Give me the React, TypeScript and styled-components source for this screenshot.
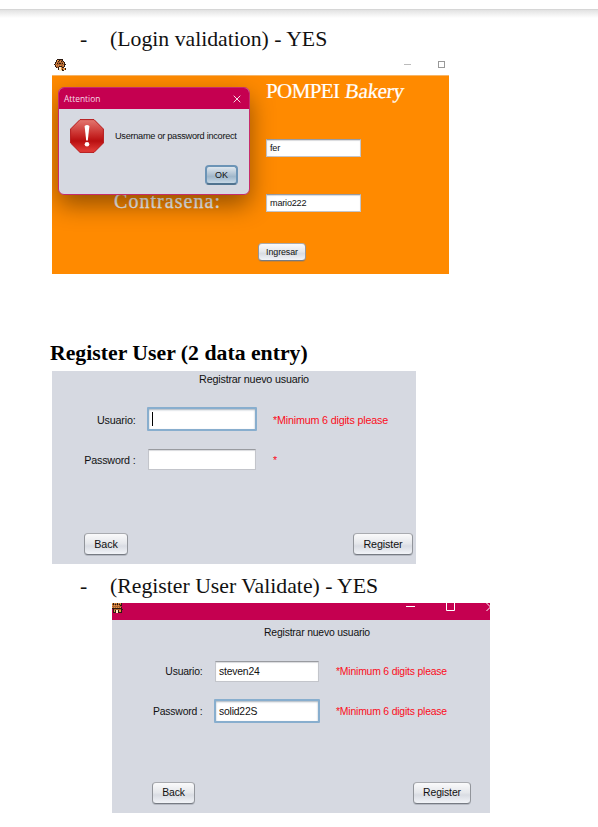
import React from "react";
import styled, { createGlobalStyle, css } from "styled-components";

const GlobalStyle = createGlobalStyle`
  * { box-sizing: border-box; }
  html, body { margin: 0; padding: 0; background: #fff; }
  body { width: 598px; height: 827px; overflow: hidden; }
`;

const sans = `"Liberation Sans", Arial, sans-serif`;
const serif = `"Liberation Serif", "Times New Roman", serif`;

const Page = styled.main`
  display: flex;
  flex-direction: column;
  align-items: flex-start;
  width: 598px;
  height: 827px;
  background: #fff;
`;

const PageEdge = styled.div`
  width: 100%;
  height: 9px;
  margin-top: 9px;
  border-top: 1px solid #d6d6d6;
  background: linear-gradient(#e2e2e2, #fff);
`;

const BulletLine = styled.h2<{ $top: number }>`
  display: flex;
  margin: ${(p) => p.$top}px 0 0 80px;
  font: 400 21.75px/24px ${serif};
  color: #111;
  white-space: nowrap;
`;

const Dash = styled.span`
  width: 30px;
`;

const SectionTitle = styled.h1`
  margin: 67px 0 6px 50px;
  font: 700 21.75px/24px ${serif};
  color: #000;
  white-space: nowrap;
`;

/* Login window */
const LoginWindow = styled.section`
  position: relative;
  width: 397px;
  height: 219px;
  margin: 4px 0 0 52px;
  overflow: hidden;
`;

const LoginTitleBar = styled.header`
  display: flex;
  align-items: flex-start;
  justify-content: space-between;
  height: 20px;
  padding: 4px 4px 0 2px;
  background: #fff;
`;

const LightControls = styled.div`
  display: flex;
  gap: 27px;
  padding-top: 2px;
`;

const LoginBody = styled.div`
  display: grid;
  grid-template-columns: 214px 1fr;
  grid-template-rows: 63px 55px 49px 31px;
  height: 199px;
  background: #ff8a00;
  border-top: 1px solid #f7b566;
`;

const Brand = styled.div`
  grid-column: 2;
  display: flex;
  gap: 4px;
  padding-top: 2px;
  font: 400 21px/26px Gabriola, ${serif};
  color: #fff;
  white-space: nowrap;
`;

const BrandName = styled.span`
  letter-spacing: -0.6px;
  -webkit-text-stroke: 0.2px #fff;
`;

const BrandKind = styled.span`
  transform: skewX(-7deg);
  font-size: 21px;
  letter-spacing: -0.35px;
  -webkit-text-stroke: 0.2px #fff;
`;

const Caption = styled.div`
  margin-top: -5px;
  padding: 0 0 0 62px;
  font: 400 20px/24px Gabriola, ${serif};
  letter-spacing: 1.05px;
  -webkit-text-stroke: 0.25px #fff;
  color: #fff;
`;

const LoginAction = styled.div`
  grid-column: 2;
  margin-left: -8px;
`;

const Dialog = styled.div`
  position: absolute;
  left: 6px;
  top: 32px;
  width: 192px;
  height: 108px;
  border: 1px solid #c62c6c;
  border-radius: 6px;
  background: #d6d9e1;
  box-shadow: 0 10px 24px rgba(0, 0, 0, 0.42);
  overflow: hidden;
`;

const DialogTitle = styled.div`
  display: flex;
  align-items: center;
  justify-content: space-between;
  height: 21px;
  padding: 0 8px 0 5px;
  background: #c50050;
  color: #f6dbe7;
  font: 400 8.4px/20px "Open Sans", "Noto Sans", sans-serif;
`;

const DialogMessage = styled.div`
  display: flex;
  align-items: flex-start;
  gap: 11px;
  height: 56px;
  padding: 10px 0 0 11px;
  color: #111;
  font: 400 9.2px/12px ${sans};
  letter-spacing: -0.28px;
  white-space: nowrap;
`;

const MessageText = styled.span`
  padding-top: 11px;
`;

const DialogActions = styled.div`
  display: flex;
  justify-content: flex-end;
  padding-right: 11px;
`;

/* Swing-like controls */
const Field = styled.div<{ $w: number; $h: number; $size: number; $focused?: boolean }>`
  display: flex;
  flex-shrink: 0;
  align-items: center;
  width: ${(p) => p.$w}px;
  height: ${(p) => p.$h}px;
  padding: 2px 0 0 3px;
  background: #fff;
  border: 1px solid #c3c5cb;
  border-top-color: #999ba0;
  box-shadow: inset 0 1px 1px #d9dadd;
  color: #111;
  font: 400 ${(p) => p.$size}px/1 ${sans};
  letter-spacing: -0.2px;
  ${(p) =>
    p.$focused &&
    css`
      border: 2px solid #88aece;
      border-radius: 1px;
      box-shadow: inset 0 1px 2px #a9b4be;
    `}
`;

const Caret = styled.span`
  width: 1px;
  height: 14px;
  margin-top: -3px;
  background: #000;
`;

const Button = styled.button<{ $w: number; $h: number; $size: number; $primary?: boolean }>`
  display: flex;
  align-items: center;
  justify-content: center;
  width: ${(p) => p.$w}px;
  height: ${(p) => p.$h}px;
  padding: 1px 0 0;
  border: 1px solid #92959b;
  border-top-color: #a9abb0;
  border-bottom-color: #777b83;
  border-radius: 4px;
  background: linear-gradient(#fafafb, #e5e7eb 48%, #d9dce3 60%, #f2f4f8);
  box-shadow: 0 1px 0 rgba(110, 115, 125, 0.3);
  color: #111;
  font: 400 ${(p) => p.$size}px/1 ${sans};
  letter-spacing: -0.1px;
  ${(p) =>
    p.$primary &&
    css`
      padding: 0;
      border: 2px solid #6c94b6;
      border-bottom-color: #50738f;
      background: linear-gradient(#dfe7ee, #adc0d1 48%, #a0b7ca 60%, #c6d8e6);
      box-shadow: none;
    `}
`;

/* Registration panels */
type Metrics = {
  width: number;
  left: number;
  size: number;
  titleCenter: number;
  labelEnd: number;
  fieldStart: number;
  fieldWidth: number;
  errorStart: number;
  titleHeight: number;
  footerHeight: number;
  backStart: number;
  backWidth: number;
  registerWidth: number;
  registerGap: number;
};

const Panel = styled.section<{ $m: Metrics; $top: number }>`
  width: ${(p) => p.$m.width}px;
  margin: ${(p) => p.$top}px 0 0 ${(p) => p.$m.left}px;
  background: #d6d9e1;
  color: #111;
  font: 400 ${(p) => p.$m.size}px/14px ${sans};
  letter-spacing: -0.19px;
  overflow: hidden;
`;

const PanelBar = styled.header`
  display: flex;
  justify-content: space-between;
  height: 17px;
  background: #c50050;
`;

const PanelHeading = styled.div<{ $m: Metrics }>`
  display: flex;
  justify-content: center;
  align-items: center;
  width: ${(p) => p.$m.titleCenter * 2}px;
  height: ${(p) => p.$m.titleHeight}px;
  white-space: nowrap;
`;

const FormRow = styled.div<{ $m: Metrics }>`
  display: grid;
  grid-template-columns:
    ${(p) => p.$m.labelEnd}px
    ${(p) => p.$m.fieldStart - p.$m.labelEnd}px
    ${(p) => p.$m.fieldWidth}px
    ${(p) => p.$m.errorStart - p.$m.fieldStart - p.$m.fieldWidth}px
    1fr;
  align-items: center;
  height: 24px;
`;

const Label = styled.label`
  padding-top: 2px;
  text-align: right;
`;

const FieldSlot = styled.div`
  grid-column: 3;
  display: flex;
  justify-content: center;
`;

const ErrorText = styled.span`
  grid-column: 5;
  padding-top: 2px;
  color: #fb0d1b;
  white-space: nowrap;
`;

const ButtonRow = styled.div<{ $m: Metrics }>`
  display: flex;
  justify-content: space-between;
  align-items: flex-start;
  height: ${(p) => p.$m.footerHeight}px;
  padding: 0 ${(p) => p.$m.registerGap}px 0 ${(p) => p.$m.backStart}px;
`;

const bakeryPixels = [
  "...kkkkkk...",
  "..kookbbk...",
  "..kokbokbk..",
  ".kbbbbbbbbk.",
  ".kokbkkbkok.",
  "kbbbbbbbbbkk",
  ".kobobobbok.",
  ".kbbbkkkbbk.",
  "..kbkwwokk..",
  "....kwwobook",
  "....kwwokook",
  ".....wwwkk..",
];

const barBakeryPixels = [
  "okobokobok..",
  "bkbkbkbkbk..",
  "obobobobkk..",
  "bbbbbbbbb...",
  "obobobobok..",
  "kkkkkkkkkk..",
  ".kbbbbbbbkk.",
  ".kokwwkook..",
  ".kokwwkook..",
  ".kkkwwkkkk..",
];

const pixelColors: Record<string, string> = { k: "#2e1a10", b: "#ae642f", o: "#e59545", w: "#ffedca" };

function BakeryIcon({ pixels }: { pixels: string[] }) {
  return (
    <svg width="12" height={pixels.length} viewBox={`0 0 12 ${pixels.length}`} shapeRendering="crispEdges">
      {pixels.flatMap((row, y) =>
        [...row].map((c, x) =>
          c === "." ? null : <rect key={`${x}-${y}`} x={x} y={y} width="1" height="1" fill={pixelColors[c]} />
        )
      )}
    </svg>
  );
}

function StopSign() {
  return (
    <svg width="34" height="34" viewBox="0 0 34 34">
      <defs>
        <linearGradient id="stop" x1="0" y1="0" x2="0" y2="1">
          <stop offset="0" stopColor="#e37770" />
          <stop offset="0.45" stopColor="#c92d2b" />
          <stop offset="0.65" stopColor="#b90f10" />
          <stop offset="1" stopColor="#e5403b" />
        </linearGradient>
      </defs>
      <path d="M10 .6H24L33.4 10V24L24 33.4H10L.6 24V10Z" fill="url(#stop)" stroke="#b5191a" />
      <path d="M14.6 7Q17 5 19.400 7L17.800 21.500H16.200Z" fill="#fff" />
      <circle cx="17" cy="25.300" r="2.300" fill="#fff" />
    </svg>
  );
}

const firstForm: Metrics = {
  width: 364, left: 52, size: 10.75, titleCenter: 202, labelEnd: 83.5,
  fieldStart: 96, fieldWidth: 108, errorStart: 221, titleHeight: 16, footerHeight: 31,
  backStart: 32, backWidth: 44, registerWidth: 60, registerGap: 3,
};

const secondForm: Metrics = {
  width: 378, left: 112, size: 10.4, titleCenter: 205, labelEnd: 90.5,
  fieldStart: 103, fieldWidth: 104, errorStart: 224, titleHeight: 25, footerHeight: 31,
  backStart: 40, backWidth: 43, registerWidth: 58, registerGap: 19,
};

type Entry = { value?: string; focused?: boolean; caret?: boolean; error: string };

const Gap = styled.div<{ $h: number }>`
  height: ${(p) => p.$h}px;
`;

function RegisterForm({
  m, top, bar, user, password, gaps,
}: {
  m: Metrics; top: number; bar?: boolean; user: Entry; password: Entry; gaps: [number, number, number];
}) {
  const row = (label: string, e: Entry) => (
    <FormRow $m={m}>
      <Label>{label}</Label>
      <FieldSlot>
        <Field $w={m.fieldWidth + (e.focused ? 2 : 0)} $h={e.focused ? 24 : 21} $size={m.size} $focused={e.focused}>
          {e.caret ? <Caret /> : e.value}
        </Field>
      </FieldSlot>
      <ErrorText>{e.error}</ErrorText>
    </FormRow>
  );
  return (
    <Panel $m={m} $top={top}>
      {bar && (
        <PanelBar>
          <BakeryIcon pixels={barBakeryPixels} />
          <svg width="84" height="17" viewBox="0 0 84 17" fill="none" stroke="#fff">
            <path d="M0 3.500H9M40.500 0V7.500H48.500V0M80.500 0L84.500 4L80.500 8" />
          </svg>
        </PanelBar>
      )}
      <PanelHeading $m={m}>Registrar nuevo usuario</PanelHeading>
      <Gap $h={gaps[0]} />
      {row("Usuario:", user)}
      <Gap $h={gaps[1]} />
      {row("Password :", password)}
      <Gap $h={gaps[2]} />
      <ButtonRow $m={m}>
        <Button $w={m.backWidth} $h={22} $size={m.size}>Back</Button>
        <Button $w={m.registerWidth} $h={22} $size={m.size}>Register</Button>
      </ButtonRow>
    </Panel>
  );
}

export default function App() {
  return (
    <>
      <GlobalStyle />
      <Page>
        <PageEdge />
        <BulletLine $top={9}><Dash>-</Dash>(Login validation) - YES</BulletLine>
        <LoginWindow>
          <LoginTitleBar>
            <BakeryIcon pixels={bakeryPixels} />
            <LightControls>
              <svg width="7" height="7"><path d="M0 3.500H7" stroke="#bbb" /></svg>
              <svg width="7" height="7"><rect x=".5" y=".5" width="6" height="6" fill="none" stroke="#999" /></svg>
            </LightControls>
          </LoginTitleBar>
          <LoginBody>
            <Brand><BrandName>POMPEI</BrandName><BrandKind>Bakery</BrandKind></Brand>
            <span />
            <Field $w={95} $h={18} $size={9.1}>fer</Field>
            <Caption>Contrasena:</Caption>
            <Field $w={95} $h={18} $size={9.1}>mario222</Field>
            <LoginAction><Button $w={48} $h={18} $size={8.9}>Ingresar</Button></LoginAction>
          </LoginBody>
          <Dialog>
            <DialogTitle>
              Attention
              <svg width="8" height="8" stroke="#f6dbe7"><path d="M.7 .7L7.300 7.300M7.300 .7L.7 7.300" /></svg>
            </DialogTitle>
            <DialogMessage><StopSign /><MessageText>Username or password incorect</MessageText></DialogMessage>
            <DialogActions><Button $w={33} $h={20} $size={9} $primary>OK</Button></DialogActions>
          </Dialog>
        </LoginWindow>

        <SectionTitle>Register User (2 data entry)</SectionTitle>
        <RegisterForm
          m={firstForm}
          top={0}
          gaps={[20, 16, 62]}
          user={{ focused: true, caret: true, error: "*Minimum 6 digits please" }}
          password={{ error: "*" }}
        />

        <BulletLine $top={10}><Dash>-</Dash>(Register User Validate) - YES</BulletLine>
        <RegisterForm
          m={secondForm}
          top={5}
          bar
          gaps={[14, 16, 59]}
          user={{ value: "steven24", error: "*Minimum 6 digits please" }}
          password={{ value: "solid22S", focused: true, error: "*Minimum 6 digits please" }}
        />
      </Page>
    </>
  );
}
